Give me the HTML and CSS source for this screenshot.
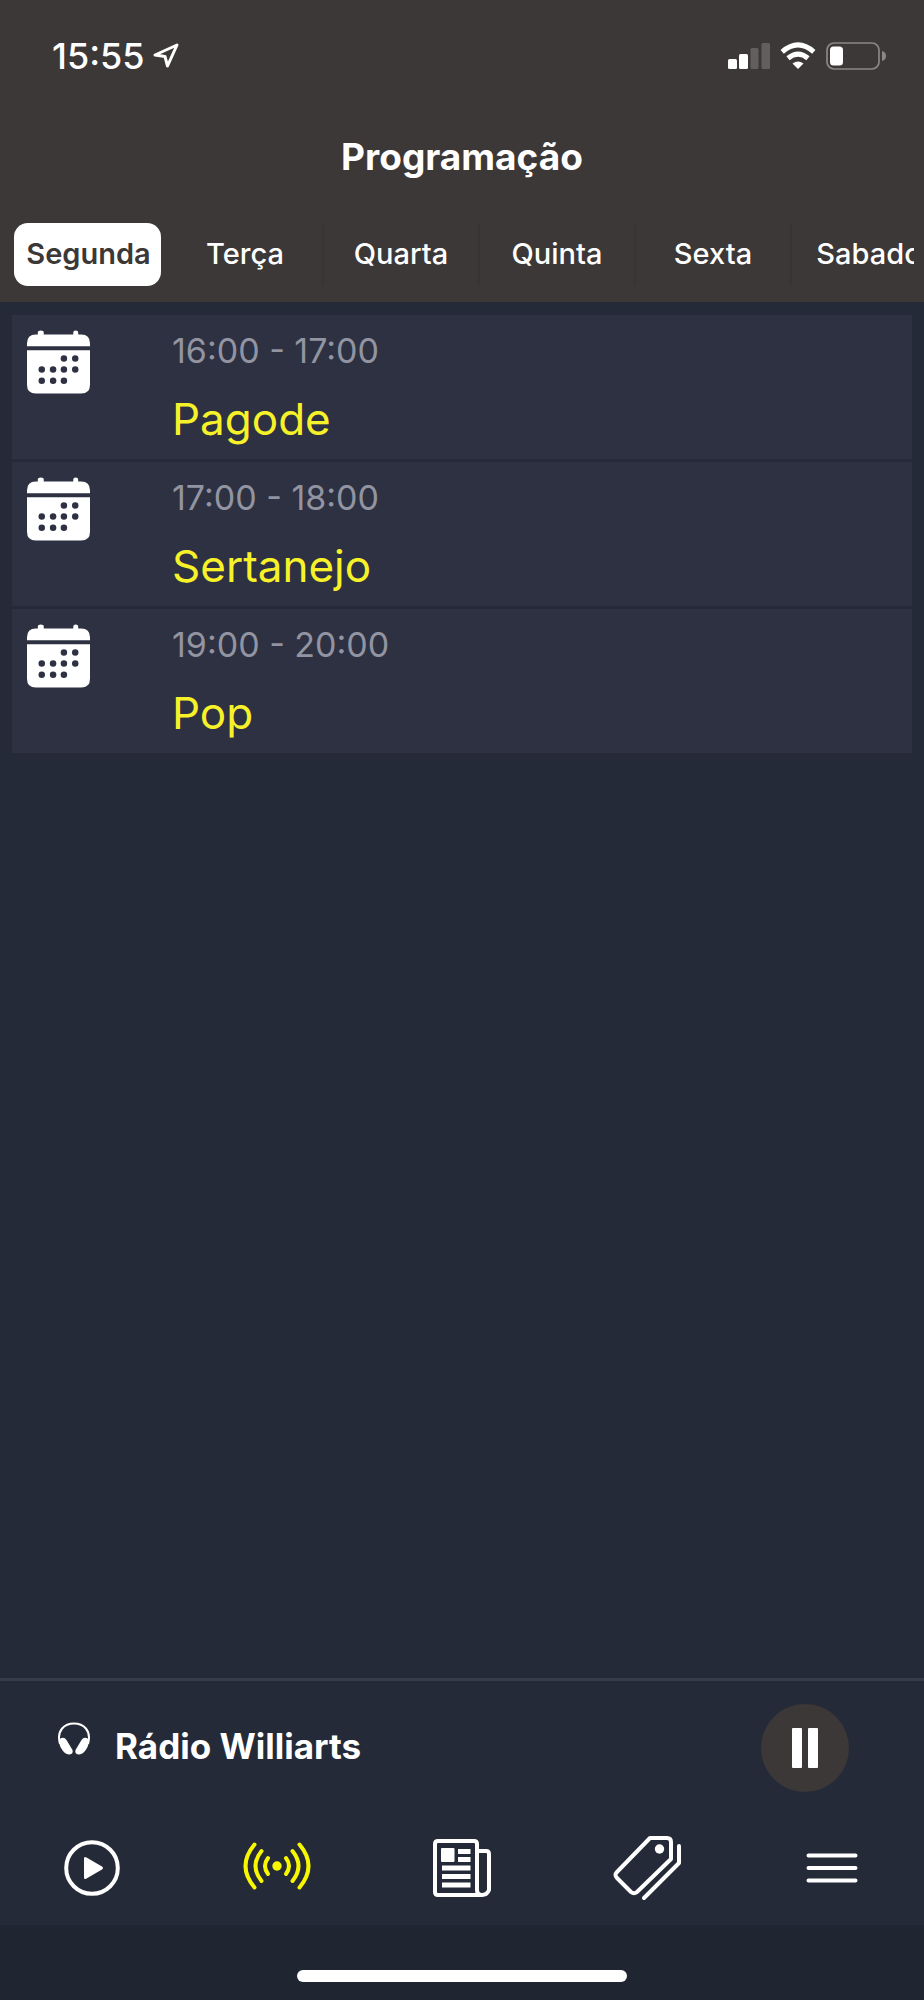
FILE: index.html
```html
<!DOCTYPE html>
<html lang="pt-BR">
<head>
<meta charset="utf-8">
<meta name="viewport" content="width=device-width, initial-scale=1">
<title>Programação</title>
<link rel="stylesheet" href="styles.css">
</head>
<body>
<svg class="sprite" aria-hidden="true">
  <symbol id="calendar" viewBox="0 0 64 64">
    <path fill="#fff" d="M0 16V13Q0 4 9 4h2V2q0-2 3-2t3 2v2h30V2q0-2 2.500-2T52 2v2h3q9 0 9 9v3z"/>
    <path fill="#fff" d="M0 20h64v35q0 9-9 9H9q-9 0-9-9z"/>
    <g fill="#2d3142"><circle cx="37.500" cy="28.500" r="3.300"/><circle cx="49" cy="28.500" r="3.300"/><circle cx="15" cy="39.500" r="3.300"/><circle cx="26.500" cy="39.500" r="3.300"/><circle cx="37.500" cy="39.500" r="3.300"/><circle cx="49" cy="39.500" r="3.300"/><circle cx="15" cy="51" r="3.300"/><circle cx="26.500" cy="51" r="3.300"/><circle cx="37.500" cy="51" r="3.300"/></g>
  </symbol>
</svg>
<div class="app">
  <header class="header">
    <div class="status">
      <div class="clock">
        <span>15:55</span>
        <svg width="26" height="26" viewBox="0 0 26 26" fill="none" stroke="#fff" stroke-width="3" stroke-linejoin="round"><path d="M2 12L24 2 14.500 23 12 13.500z"/></svg>
      </div>
      <div class="indicators">
        <svg width="42" height="28" viewBox="0 0 42 28"><g fill="#fff"><rect y="17" width="9" height="10" rx="1.500"/><rect x="11" y="12" width="9" height="15" rx="1.500"/></g><g fill="#625f5e"><rect x="22.500" y="6" width="8" height="21" rx="1.500"/><rect x="33.500" y="1" width="8.500" height="26" rx="1.500"/></g></svg>
        <svg width="36" height="28" viewBox="0 0 36 28"><g fill="none" stroke="#fff" stroke-width="5"><path d="M2.200 9.800Q18-4 33.800 9.800"/><path d="M8 16.200Q18 8 28 16.200"/></g><path fill="#fff" d="M12.500 21.500Q18 17.500 23.500 21.500L18 27z"/></svg>
        <svg width="60" height="28" viewBox="0 0 60 28"><rect x="1" y="1" width="52" height="26" rx="7" fill="none" stroke="#8a8786" stroke-width="1.700"/><rect x="4" y="4.500" width="13" height="19" rx="3.500" fill="#fff"/><path d="M56 9q4 1 4 5t-4 5z" fill="#8a8786"/></svg>
      </div>
    </div>
    <h1 class="title">Programação</h1>
    <nav class="days" aria-label="Dias da semana">
      <button class="day day-active" type="button"><span>Segunda</span></button>
      <button class="day" type="button">Terça</button>
      <button class="day" type="button">Quarta</button>
      <button class="day" type="button">Quinta</button>
      <button class="day" type="button">Sexta</button>
      <button class="day" type="button">Sabado</button>
    </nav>
  </header>

  <main class="schedule">
    <ul class="programs">
      <li class="program"><svg class="calendar"><use href="#calendar"/></svg><div><p class="hours">16:00 - 17:00</p><h2 class="name">Pagode</h2></div></li>
      <li class="program"><svg class="calendar"><use href="#calendar"/></svg><div><p class="hours">17:00 - 18:00</p><h2 class="name">Sertanejo</h2></div></li>
      <li class="program"><svg class="calendar"><use href="#calendar"/></svg><div><p class="hours">19:00 - 20:00</p><h2 class="name">Pop</h2></div></li>
    </ul>
  </main>

  <section class="player" aria-label="Player">
    <svg class="phones" width="32" height="34" viewBox="0 0 32 34"><path d="M2 22C-2 8 7 1.500 16 1.500S34 8 30 22" fill="none" stroke="#fff" stroke-width="2"/><g fill="#fff"><path d="M1.500 17Q6 14 8.500 18L14.500 28Q15.500 32 11.500 32.500 7 33 3 26 .5 21 1.500 17z"/><path d="M30.500 17Q26 14 23.500 18L17.500 28Q16.500 32 20.500 32.500 25 33 29 26 31.500 21 30.500 17z"/></g></svg>
    <span class="station">Rádio Williarts</span>
    <button class="pause" type="button" aria-label="Pausar"><svg width="28" height="42" viewBox="0 0 28 42" fill="#fff"><rect x="1" y="1" width="10" height="40" rx="1"/><rect x="17" y="1" width="10" height="40" rx="1"/></svg></button>
  </section>

  <nav class="tabbar" aria-label="Principal">
    <a class="tab" href="#play" aria-label="Tocar"><svg width="56" height="56" viewBox="0 0 56 56"><circle cx="28" cy="28" r="25.800" fill="none" stroke="#fff" stroke-width="4"/><path d="M20 18.500Q20 16 22.500 17.500L38 26.500Q40 28 38 29.500L22.500 38.500Q20 40 20 37.500z" fill="#fff"/></svg></a>
    <a class="tab tab-signal" href="#programs" aria-label="Programação"><svg width="68" height="48" viewBox="0 0 68 48" fill="none" stroke="#f7f700" stroke-width="4" stroke-linecap="round"><circle cx="34" cy="24" r="4.700" fill="#f7f700" stroke="none"/><path d="M25 16q-6 8 0 16M18.500 9q-12 15 0 30M11.500 2.500q-18 21.500 0 43M43 16q6 8 0 16M49.500 9q12 15 0 30M56.500 2.500q18 21.500 0 43"/></svg></a>
    <a class="tab" href="#news" aria-label="Notícias"><svg width="58" height="58" viewBox="0 0 58 58" fill="none" stroke="#fff" stroke-width="4" stroke-linejoin="round"><path d="M50 56H5q-3 0-3-3V5q0-3 3-3h36q3 0 3 3v46q0 5 5 5t7-5V15q0-3-3-3h-9"/><rect x="8" y="9" width="13.500" height="14" rx="1" fill="#fff" stroke="none"/><path stroke-width="5" d="M25 12.500h12.500M25 20.500h12.500M9 29h28.500M9 37.500h28.500M9 46h28.500"/></svg></a>
    <a class="tab" href="#offers" aria-label="Promoções"><svg width="68" height="66" viewBox="0 0 68 66" fill="none" stroke="#fff" stroke-width="4" stroke-linecap="round" stroke-linejoin="round"><path d="M37 3h17q4 0 4 4v17L24 57q-3 2.500-6 0L4 43q-3-3 0-6z"/><path d="M66 11v17L31 63"/><circle cx="46.500" cy="14" r="4.700" fill="#fff" stroke="none"/></svg></a>
    <a class="tab" href="#menu" aria-label="Menu"><svg width="52" height="32" viewBox="0 0 52 32" stroke="#fff" stroke-width="4" stroke-linecap="round"><path d="M2.500 3.500h47M2.500 16h47M2.500 28.500h47"/></svg></a>
  </nav>
  <footer class="home"><div class="home-bar"></div></footer>
</div>
</body>
</html>
```

FILE: styles.css
```css
* { box-sizing: border-box; }
body { margin: 0; background: #242a37; color: #fff; font-family: Inter, "Liberation Sans", sans-serif; }
h1, h2, p, ul { margin: 0; padding: 0; }
svg { display: block; flex: none; }
button { border: 0; padding: 0; color: inherit; font: inherit; background: none; }
.sprite { position: absolute; width: 0; height: 0; }
.app { display: flex; flex-direction: column; min-height: 100vh; }

.header { background: #3c3837; padding-bottom: 16px; }
.status { display: flex; justify-content: space-between; align-items: center; height: 112px; padding: 0 38px 0 52px; }
.clock { display: flex; align-items: center; gap: 8px; font-size: 36px; font-weight: 500; }
.indicators { display: flex; align-items: center; gap: 10px; }
.title { font-size: 37px; line-height: 44px; padding: 23px 0 44px; text-align: center; font-weight: 700; }
.days { display: flex; margin: 0 10px; overflow: hidden; }
.day { flex: 0 0 156px; height: 63px; padding-bottom: 2px; font-size: 29px; font-weight: 500; border-left: 2px solid #383433; }
.day:nth-child(-n+2) { border-color: transparent; }
.day-active { padding: 0 5px 0 4px; border: 0; font-weight: 600; color: #3c3837; }
.day-active span { display: flex; align-items: center; justify-content: center; height: 63px; padding: 0 0 2px 2px; border-radius: 14px; background: #fff; }

.schedule { flex: 1; padding: 13px 12px; }
.programs { display: flex; flex-direction: column; gap: 3px; list-style: none; }
.program { display: flex; gap: 82px; height: 144px; padding: 15px 15px 0; background: #2d3142; }
.calendar { width: 63px; height: 64px; }
.hours { padding-top: 1px; font-size: 34px; line-height: 40px; color: #9294a1; }
.name { font-size: 44px; line-height: 56px; padding-top: 20px; font-weight: 400; color: #f7f12a; }

.player { display: flex; align-items: center; height: 137px; padding: 0 75px 0 58px; border-top: 3px solid #363c4a; }
.phones { margin-bottom: 18px; }
.station { flex: 1; padding: 0 0 4px 25px; font-size: 35px; font-weight: 700; }
.pause { display: flex; align-items: center; justify-content: center; width: 88px; height: 88px; border-radius: 50%; background: #3c3837; }

.tabbar { display: flex; height: 110px; }
.tab { flex: 1; display: flex; align-items: center; justify-content: center; padding-bottom: 4px; }
.tab-signal { padding-bottom: 8px; }
.home { display: flex; justify-content: center; align-items: flex-end; height: 75px; padding-bottom: 18px; background: #202631; }
.home-bar { width: 330px; height: 12px; border-radius: 6px; background: #fff; }
```
